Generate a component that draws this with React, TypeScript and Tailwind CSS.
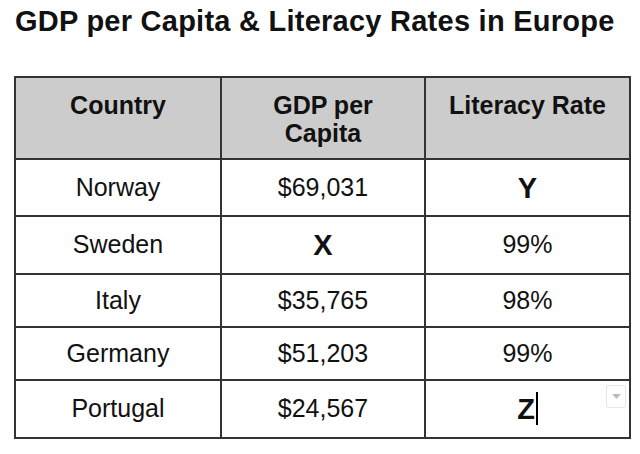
import React from "react";

const rows = [
  { country: "Norway", gdp: "$69,031", lit: "Y", h: "h-[57px]" },
  { country: "Sweden", gdp: "X", lit: "99%", h: "h-[58px]" },
  { country: "Italy", gdp: "$35,765", lit: "98%", h: "h-[53px]" },
  { country: "Germany", gdp: "$51,203", lit: "99%", h: "h-[53px]" },
  { country: "Portugal", gdp: "$24,567", lit: "Z", h: "h-[58px]" },
];

const isLetter = (v: string) => v.length === 1;

const Cell = ({ value, last }: { value: string; last?: boolean }) => (
  <td className="relative border-2 border-[#333] text-center align-middle p-0">
    {isLetter(value) ? (
      <span className="text-[29px] font-bold leading-[34px]">
        {value}
        {last && <span className="inline-block w-[2px] h-[33px] bg-black ml-[1px] align-[-6px]" />}
      </span>
    ) : (
      <span className="text-[25px] leading-[29px]">{value}</span>
    )}
    {last && (
      <div className="absolute top-[4px] right-[3px] w-[20px] h-[23px] rounded-[2px] border border-[#e6e6e6] bg-white flex items-center justify-center">
        <svg width="9" height="5" viewBox="0 0 9 5">
          <path d="M0 0 L9 0 L4.5 5 Z" fill="#bdbdbd" />
        </svg>
      </div>
    )}
  </td>
);

export default function App() {
  return (
    <div className="w-[640px] h-[454px] bg-white text-[#111] font-['Liberation_Sans',Arial,sans-serif] overflow-hidden">
      <h1 className="pt-[4px] pl-[15px] text-[29px] leading-[34px] font-bold tracking-[0.25px]">
        GDP per Capita &amp; Literacy Rates in Europe
      </h1>
      <table className="mt-[38px] ml-[14px] w-[615px] table-fixed border-collapse">
        <colgroup>
          <col className="w-[206px]" />
          <col className="w-[204px]" />
          <col className="w-[205px]" />
        </colgroup>
        <thead>
          <tr className="h-[82px] bg-[#cccccc]">
            <th className="border-2 border-[#333] align-top pt-[13px] text-[25px] leading-[28px] font-bold">Country</th>
            <th className="border-2 border-[#333] align-top pt-[13px] text-[25px] leading-[28px] font-bold">
              GDP per
              <br />
              Capita
            </th>
            <th className="border-2 border-[#333] align-top pt-[13px] text-[25px] leading-[28px] font-bold">Literacy Rate</th>
          </tr>
        </thead>
        <tbody>
          {rows.map((r, i) => (
            <tr key={r.country} className={r.h}>
              <Cell value={r.country} />
              <Cell value={r.gdp} />
              <Cell value={r.lit} last={i === rows.length - 1} />
            </tr>
          ))}
        </tbody>
      </table>
    </div>
  );
}
